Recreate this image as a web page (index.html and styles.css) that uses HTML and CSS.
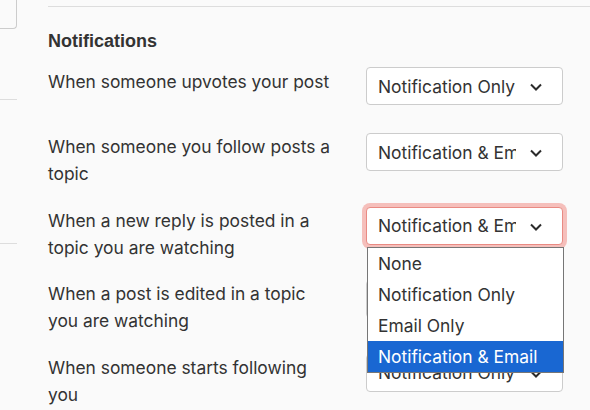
FILE: index.html
```html
<!DOCTYPE html>
<html lang="en">

<head>
    <meta charset="UTF-8">
    <meta name="viewport" content="width=device-width, initial-scale=1.0">
    <title>Notification settings</title>
    <link rel="stylesheet" href="styles.css">
</head>

<body>

    <div class="page">
        <!-- left nav, mostly scrolled out of view -->
        <div class="sidebar">
            <div class="side-box"></div>
            <div class="side-line first"></div>
            <div class="side-line second"></div>
        </div>

        <div class="main">
            <h3>Notifications</h3>

            <div class="row first-row">
                <label>When someone upvotes your post</label>
                <div class="select">
                    <span class="value">Notification Only</span>
                    <svg class="chevron" width="12" height="8" viewBox="0 0 12 8"><path d="M1 1.5 L6 6.5 L11 1.5" /></svg>
                </div>
            </div>

            <div class="row">
                <label>When someone you follow posts a topic</label>
                <div class="select">
                    <span class="value">Notification &amp; Email</span>
                    <svg class="chevron" width="12" height="8" viewBox="0 0 12 8"><path d="M1 1.5 L6 6.5 L11 1.5" /></svg>
                </div>
            </div>

            <div class="row">
                <label>When a new reply is posted in a topic you are watching</label>
                <div class="select open">
                    <span class="value">Notification &amp; Email</span>
                    <svg class="chevron" width="12" height="8" viewBox="0 0 12 8"><path d="M1 1.5 L6 6.5 L11 1.5" /></svg>
                    <!-- opened option list -->
                    <ul class="options">
                        <li>None</li>
                        <li>Notification Only</li>
                        <li>Email Only</li>
                        <li class="selected">Notification &amp; Email</li>
                    </ul>
                </div>
            </div>

            <div class="row">
                <label>When a post is edited in a topic you are watching</label>
                <div class="select">
                    <span class="value">Notification Only</span>
                    <svg class="chevron" width="12" height="8" viewBox="0 0 12 8"><path d="M1 1.5 L6 6.5 L11 1.5" /></svg>
                </div>
            </div>

            <div class="row">
                <label>When someone starts following you</label>
                <div class="select">
                    <span class="value">Notification Only</span>
                    <svg class="chevron" width="12" height="8" viewBox="0 0 12 8"><path d="M1 1.5 L6 6.5 L11 1.5" /></svg>
                </div>
            </div>
        </div>
    </div>

</body>

</html>
```

FILE: styles.css
```css
body {
    margin: 0;
    background-color: #fafafa;
    font-family: Inter, "Noto Sans", sans-serif;
    color: #333;
    overflow: hidden;
}

.page {
    display: flex;
    gap: 31px;
}

.sidebar {
    width: 17px;
    flex-shrink: 0;
}

.side-box {
    height: 28px;
    border-right: 1px solid #ccc;
    border-bottom: 1px solid #ccc;
    border-bottom-right-radius: 4px;
}

.side-line {
    height: 1px;
    background-color: #ddd;
}

.side-line.first {
    margin-top: 70px;
}

.side-line.second {
    margin-top: 143px;
}

.main {
    flex-grow: 1;
    margin-top: 6px;
    padding-right: 27px;
    border-top: 1px solid #ddd;
}

h3 {
    font-family: "Liberation Sans", Arial, sans-serif;
    font-size: 18px;
    line-height: 21px;
    font-weight: bold;
    margin: 24px 0 15px;
    color: #333;
}

.row {
    display: flex;
    justify-content: space-between;
    align-items: flex-start;
    margin-bottom: 18.5px;
}

.first-row {
    margin-bottom: 27px;
}

.row label {
    width: 292px;
    padding-top: 1px;
    font-size: 17.4px;
    line-height: 27px;
}

.select {
    position: relative;
    box-sizing: border-box;
    width: 197px;
    height: 38px;
    margin-top: 1px;
    display: flex;
    align-items: center;
    padding: 0 46px 0 11px;
    background-color: #fff;
    border: 1px solid #ccc;
    border-radius: 4px;
    font-size: 17.4px;
}

.first-row .select {
    margin-top: 0;
}

.select .value {
    white-space: nowrap;
    overflow: hidden;
}

.chevron {
    position: absolute;
    right: 20px;
    top: 15px;
}

.chevron path {
    fill: none;
    stroke: #2b2b2b;
    stroke-width: 2;
}

/* focused select with red ring */
.select.open {
    border-color: #e98a83;
    box-shadow: 0 0 0 4px #f5bfbb;
}

.options {
    position: absolute;
    top: 39px;
    left: 0;
    z-index: 2;
    width: 195px;
    margin: 0;
    padding: 0;
    list-style: none;
    background-color: #fff;
    border: 1px solid #767676;
}

.options li {
    height: 31px;
    line-height: 31px;
    padding-left: 10px;
    white-space: nowrap;
}

.options li.selected {
    background-color: #1967d2;
    color: #fff;
}
```
